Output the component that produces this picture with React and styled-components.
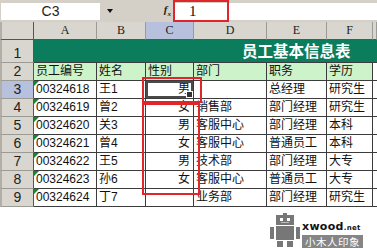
import React from 'react';
import styled, { createGlobalStyle, css } from 'styled-components';

const Global = createGlobalStyle`
  html, body { margin: 0; padding: 0; background: #fff; }
`;

const Page = styled.div`
  width: 377px;
  height: 248px;
  background: #fff;
  overflow: hidden;
  display: flex;
  flex-direction: column;
`;

const FormulaBar = styled.div`
  height: 22px;
  flex: none;
  display: flex;
  align-items: center;
  background: #d4d0c8;
`;

const NameBox = styled.div`
  width: 99px;
  height: 17px;
  margin-left: 1px;
  background: #fff;
  display: flex;
  align-items: center;
  justify-content: center;
  font: 14px "Liberation Sans", sans-serif;
  color: #222;
`;

const DropBox = styled.div`
  width: 20px;
  display: flex;
  justify-content: center;
  align-items: center;
  &::after {
    content: '';
    border-left: 3px solid transparent;
    border-right: 3px solid transparent;
    border-top: 4px solid #111;
  }
`;

const Fx = styled.div`
  width: 53px;
  text-align: right;
  padding-right: 2px;
  box-sizing: border-box;
  font: italic bold 11px "Liberation Serif", serif;
  color: #222;
`;

const FormulaInput = styled.div`
  flex: 1;
  align-self: stretch;
  margin: 3px 0 2px;
  background: #fff;
  display: flex;
`;

const Highlight = styled.div`
  width: 56px;
  margin: -3px 0 -2px;
  box-sizing: border-box;
  border: 2px solid #e0262a;
  padding-left: 14px;
  display: flex;
  align-items: center;
  font: 15px "Liberation Serif", serif;
  color: #111;
`;

const SheetWrap = styled.div`
  position: relative;
  flex: none;
`;

const Sheet = styled.div`
  display: grid;
  grid-template-columns: 34px 63px 49px 48px 73px 60px 46px 4px;
  grid-template-rows: 18px 23px repeat(8, 18px);
`;

const HeaderBase = css`
  box-sizing: border-box;
  background: ${p => (p.$active ? '#b7c0dc' : '#d9d6cf')};
  display: flex;
  justify-content: center;
  color: #222;
`;

const Corner = styled.div`
  ${HeaderBase};
  border-right: 1px solid #555;
  border-bottom: 1px solid #555;
  border-left: 2px solid #b3afa7;
`;

const ColHeader = styled.div`
  ${HeaderBase};
  align-items: center;
  border-right: 1px solid #9c9a94;
  border-bottom: 1px solid #555;
  font: 12px "Liberation Serif", serif;
`;

const RowHeader = styled.div`
  ${HeaderBase};
  align-items: flex-end;
  padding-bottom: 1px;
  border-right: 1px solid #555;
  border-bottom: 1px solid #9c9a94;
  border-left: 2px solid #b3afa7;
  font: 14px "Liberation Sans", sans-serif;
  line-height: 16px;
`;

const Title = styled.div`
  grid-column: 2 / -1;
  box-sizing: border-box;
  background: #0b7c5c;
  border-bottom: 1px solid #3c3c3c;
  display: flex;
  align-items: flex-end;
  padding: 0 0 3px 208px;
  color: #fff;
  font: bold 15.5px "Noto Sans CJK SC", sans-serif;
  line-height: 18px;
  white-space: nowrap;
`;

const Cell = styled.div`
  box-sizing: border-box;
  position: relative;
  border-right: 1px solid #3c3c3c;
  border-bottom: 1px solid #3c3c3c;
  background: ${p => p.$bg || '#fff'};
  display: flex;
  align-items: flex-end;
  justify-content: ${p => (p.$right ? 'flex-end' : 'flex-start')};
  padding: 0 ${p => (p.$right ? '3px' : '2px')} 2px;
  font: 12px "Liberation Sans", "Noto Sans CJK SC", sans-serif;
  line-height: 14px;
  color: #111;
  white-space: nowrap;
  overflow: hidden;
  ${p =>
    p.$flag &&
    css`
      &::before {
        content: '';
        position: absolute;
        left: 0;
        top: 0;
        border-top: 5px solid #14892c;
        border-right: 5px solid transparent;
      }
    `}
  ${p =>
    p.$selected &&
    css`
      box-shadow: inset 0 0 0 2px #4a4a4a, inset 0 0 0 3px #fff;
    `}
`;

const FillHandle = styled.span`
  position: absolute;
  right: 0;
  bottom: 0;
  width: 5px;
  height: 5px;
  background: #333;
  border: 1px solid #fff;
`;

const RedBox = styled.div`
  position: absolute;
  box-sizing: border-box;
  border: 2px solid #e0262a;
  pointer-events: none;
`;

const LogoArea = styled.div`
  flex: 1;
  display: flex;
  justify-content: flex-end;
  align-items: flex-start;
  padding: 6px 14px 0 0;
`;

const Logo = styled.div`
  display: flex;
  align-items: flex-start;
  gap: 2px;
`;

const LogoText = styled.div`
  display: flex;
  flex-direction: column;
  padding-top: 8px;
  gap: 1px;
`;

const Brand = styled.div`
  font: bold 11px "DejaVu Sans", sans-serif;
  line-height: 11px;
  color: #111;
  letter-spacing: 0.3px;
  & small {
    font-size: 7px;
  }
`;

const Tag = styled.div`
  width: 61px;
  height: 13px;
  background: #858585;
  color: #fff;
  font: 10.5px "Noto Sans CJK SC", sans-serif;
  line-height: 13px;
  text-align: center;
  letter-spacing: 0.5px;
`;

const rows = [
  ['00324618', '王1', '男', '', '总经理', '研究生'],
  ['00324619', '曾2', '女', '销售部', '部门经理', '研究生'],
  ['00324620', '关3', '男', '客服中心', '部门经理', '本科'],
  ['00324621', '曾4', '女', '客服中心', '普通员工', '本科'],
  ['00324622', '王5', '男', '技术部', '部门经理', '大专'],
  ['00324623', '孙6', '女', '客服中心', '普通员工', '大专'],
  ['00324624', '丁7', '', '业务部', '部门经理', '研究生'],
];

const headers = ['员工编号', '姓名', '性别', '部门', '职务', '学历'];
const cols = ['A', 'B', 'C', 'D', 'E', 'F', ''];

function Robot() {
  return (
    <svg width="30" height="34" viewBox="0 0 30 34">
      <g fill="#777">
        <rect x="13" y="0" width="4" height="2" />
        <rect x="6" y="2" width="18" height="10" />
        <rect x="6" y="13" width="18" height="14" />
        <rect x="0" y="14" width="4" height="12" />
        <rect x="26" y="14" width="4" height="12" />
        <rect x="7" y="28" width="6" height="6" />
        <rect x="17" y="28" width="6" height="6" />
      </g>
      <rect x="10" y="5" width="3" height="3" fill="#fff" />
      <rect x="17" y="5" width="3" height="3" fill="#fff" />
      <rect x="11" y="9" width="8" height="1" fill="#bbb" />
    </svg>
  );
}

export default function App() {
  return (
    <Page>
      <Global />
      <FormulaBar>
        <NameBox>C3</NameBox>
        <DropBox />
        <Fx>f<sub style={{ fontSize: 7 }}>x</sub></Fx>
        <FormulaInput>
          <Highlight>1</Highlight>
        </FormulaInput>
      </FormulaBar>
      <SheetWrap>
        <Sheet>
          <Corner />
          {cols.map((c, i) => (
            <ColHeader key={i} $active={c === 'C'}>{c}</ColHeader>
          ))}
          <RowHeader>1</RowHeader>
          <Title>员工基本信息表</Title>
          <RowHeader>2</RowHeader>
          {headers.map(h => (
            <Cell key={h} $bg="#ccf3c9">{h}</Cell>
          ))}
          <Cell />
          {rows.map((r, i) => (
            <React.Fragment key={i}>
              <RowHeader $active={i === 0}>{i + 3}</RowHeader>
              <Cell $flag>{r[0]}</Cell>
              <Cell>{r[1]}</Cell>
              <Cell $right $selected={i === 0}>
                {r[2]}
                {i === 0 && <FillHandle />}
              </Cell>
              <Cell>{r[3]}</Cell>
              <Cell>{r[4]}</Cell>
              <Cell>{r[5]}</Cell>
              <Cell />
            </React.Fragment>
          ))}
        </Sheet>
        <RedBox style={{ left: 142, top: 55, width: 60, height: 26 }} />
        <RedBox style={{ left: 142, top: 81, width: 58, height: 92 }} />
      </SheetWrap>
      <LogoArea>
        <Logo>
          <Robot />
          <LogoText>
            <Brand>xwood<small>.net</small></Brand>
            <Tag>小木人印象</Tag>
          </LogoText>
        </Logo>
      </LogoArea>
    </Page>
  );
}
